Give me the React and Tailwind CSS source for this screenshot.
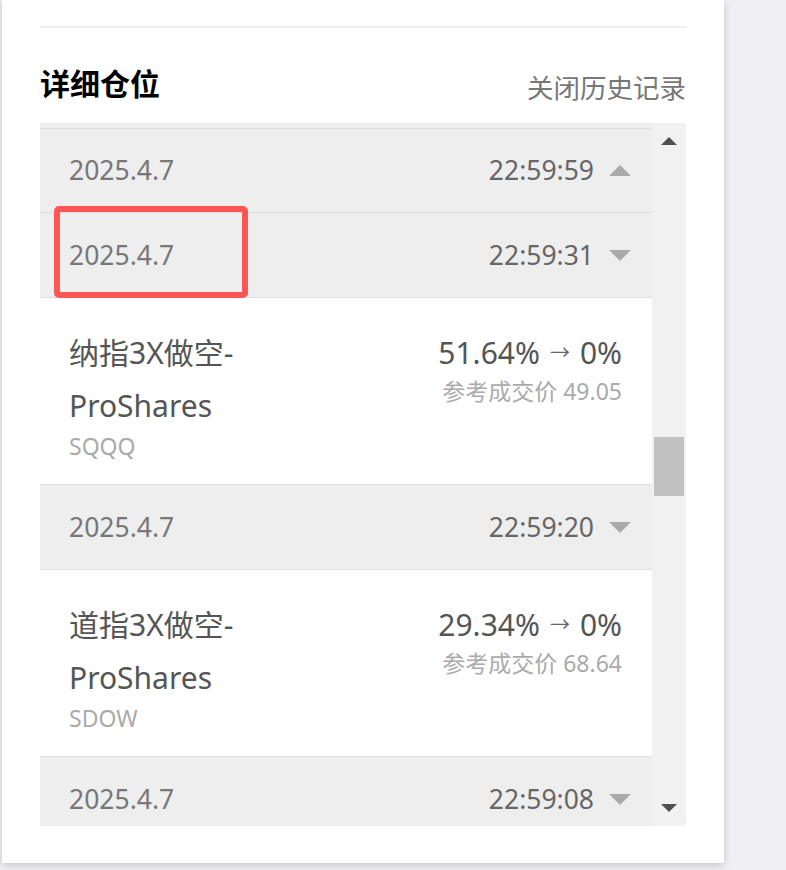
import React from "react";

const FONT = { fontFamily: '"Noto Sans", "Noto Sans CJK SC", sans-serif' };

function Tri({ up, color = "#aaaaaa", w = 22, h = 11 }) {
  return (
    <svg width={w} height={h} viewBox={`0 0 ${w} ${h}`} className="block shrink-0">
      <polygon
        points={up ? `0,${h} ${w},${h} ${w / 2},0` : `0,0 ${w},0 ${w / 2},${h}`}
        fill={color}
      />
    </svg>
  );
}

function DateRow({ date, time, up, h }) {
  return (
    <div
      className="flex items-center justify-between border-b border-[#dedede] bg-[#eeeeee] pl-[29px] pr-[21px] box-border shrink-0"
      style={{ height: h }}
    >
      <span className="text-[26.5px] text-[#777777] leading-none">{date}</span>
      <div className="flex items-center gap-[15px]">
        <span className="text-[26.5px] text-[#666666] leading-none">{time}</span>
        <Tri up={up} />
      </div>
    </div>
  );
}

function Detail({ name, code, from, to, price }) {
  return (
    <div className="flex justify-between border-b border-[#dedede] bg-white pl-[29px] pr-[30px] pt-[28px] h-[187px] box-border shrink-0">
      <div className="w-[250px]">
        <div className="text-[30px] leading-[53px] text-[#555555]">{name}</div>
        <div className="text-[23px] leading-[28px] text-[#aaaaaa]">{code}</div>
      </div>
      <div className="mt-[3px] flex flex-col items-end">
        <div className="flex items-center text-[30px] leading-[47px] text-[#555555]">
          <span>{from}</span>
          <span className="mx-[10px] text-[20px] text-[#666666]">→</span>
          <span>{to}</span>
        </div>
        <div className="text-[23px] leading-[30px] text-[#aaaaaa]">参考成交价 {price}</div>
      </div>
    </div>
  );
}

export default function App() {
  return (
    <div className="relative w-[786px] h-[870px] bg-[#efeff4] overflow-hidden" style={FONT}>
      <div className="ml-[2px] w-[722px] h-[863px] bg-white shadow-[0_2px_8px_rgba(0,0,0,0.18)] px-[38px] pt-[26px]">
        <div className="h-[2px] bg-[#eeeeee]" />
        <div className="flex items-start justify-between h-[95px]">
          <div className="mt-[33px] text-[30px] leading-[45px] font-bold text-black">详细仓位</div>
          <div className="mt-[42px] text-[26.5px] leading-[36px] text-[#777777]">关闭历史记录</div>
        </div>
        <div className="flex h-[703px] bg-[#eeeeee] rounded-br-[3px] overflow-hidden">
          <div className="w-[612px] flex flex-col overflow-hidden">
            <div className="h-[6px] border-b border-[#dedede] box-border shrink-0" />
            <DateRow date="2025.4.7" time="22:59:59" up h={84} />
            <DateRow date="2025.4.7" time="22:59:31" h={85} />
            <Detail name="纳指3X做空-ProShares" code="SQQQ" from="51.64%" to="0%" price="49.05" />
            <DateRow date="2025.4.7" time="22:59:20" h={85} />
            <Detail name="道指3X做空-ProShares" code="SDOW" from="29.34%" to="0%" price="68.64" />
            <DateRow date="2025.4.7" time="22:59:08" h={85} />
          </div>
          <div className="w-[34px] bg-[#f1f1f1] flex flex-col items-center">
            <div className="mt-[14px]">
              <Tri up color="#505050" w={16} h={8} />
            </div>
            <div className="mt-[292px] w-[30px] h-[59px] bg-[#c1c1c1]" />
            <div className="mt-[308px]">
              <Tri color="#505050" w={16} h={8} />
            </div>
          </div>
        </div>
      </div>
      <div className="absolute left-[54px] top-[206px] w-[194px] h-[92px] border-[6px] border-[#ff5555] rounded-[5px]" />
    </div>
  );
}
